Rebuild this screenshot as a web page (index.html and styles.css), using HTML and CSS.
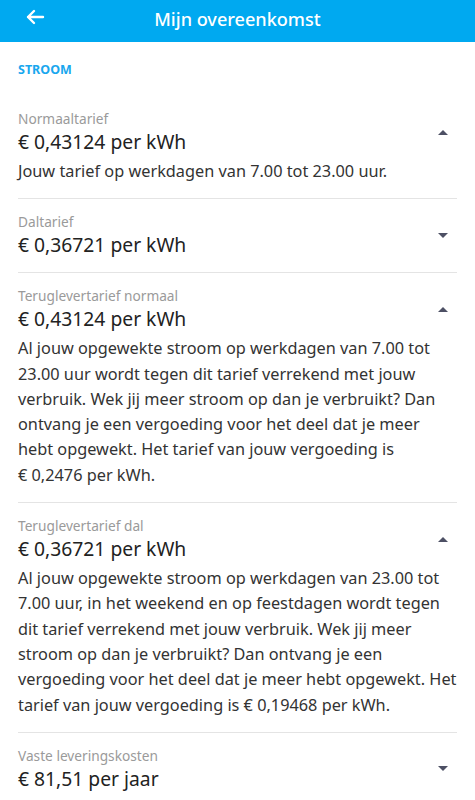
FILE: index.html
```html
<!DOCTYPE html>
<html lang="nl">
<head>
    <meta charset="UTF-8">
    <meta name="viewport" content="width=device-width, initial-scale=1.0">
    <title>Mijn overeenkomst</title>
    <link rel="stylesheet" href="styles.css">
</head>
<body>
    <header class="topbar">
        <button class="back" aria-label="Terug">
            <svg width="20" height="16" viewBox="0 0 20 16">
                <path d="M18 8H3M9 2L3 8l6 6" fill="none" stroke="#fff" stroke-width="2.4" stroke-linecap="round" stroke-linejoin="round"/>
            </svg>
        </button>
        <h1 class="title">Mijn overeenkomst</h1>
    </header>

    <main class="content">
        <h2 class="section">STROOM</h2>

        <div class="item">
            <div class="head">
                <div>
                    <div class="label">Normaaltarief</div>
                    <div class="value">€ 0,43124 per kWh</div>
                </div>
                <span class="caret up"></span>
            </div>
            <p class="desc">Jouw tarief op werkdagen van 7.00 tot 23.00 uur.</p>
        </div>

        <div class="item">
            <div class="head">
                <div>
                    <div class="label">Daltarief</div>
                    <div class="value">€ 0,36721 per kWh</div>
                </div>
                <span class="caret down"></span>
            </div>
        </div>

        <div class="item">
            <div class="head">
                <div>
                    <div class="label">Teruglevertarief normaal</div>
                    <div class="value">€ 0,43124 per kWh</div>
                </div>
                <span class="caret up"></span>
            </div>
            <p class="desc">Al jouw opgewekte stroom op werkdagen van 7.00 tot 23.00 uur wordt tegen dit tarief verrekend met jouw verbruik. Wek jij meer stroom op dan je verbruikt? Dan ontvang je een vergoeding voor het deel dat je meer hebt opgewekt. Het tarief van jouw vergoeding is €&nbsp;0,2476 per kWh.</p>
        </div>

        <div class="item">
            <div class="head">
                <div>
                    <div class="label">Teruglevertarief dal</div>
                    <div class="value">€ 0,36721 per kWh</div>
                </div>
                <span class="caret up"></span>
            </div>
            <p class="desc">Al jouw opgewekte stroom op werkdagen van 23.00 tot 7.00 uur, in het weekend en op feestdagen wordt tegen dit tarief verrekend met jouw verbruik. Wek jij meer stroom op dan je verbruikt? Dan ontvang je een vergoeding voor het deel dat je meer hebt opgewekt. Het tarief van jouw vergoeding is €&nbsp;0,19468 per kWh.</p>
        </div>

        <div class="item">
            <div class="head">
                <div>
                    <div class="label">Vaste leveringskosten</div>
                    <div class="value">€ 81,51 per jaar</div>
                </div>
                <span class="caret down"></span>
            </div>
        </div>
    </main>
</body>
</html>
```

FILE: styles.css
```css
body {
    margin: 0;
    font-family: "Noto Sans", Arial, sans-serif;
    background: #fff;
    color: #2a2a2a;
}

.topbar {
    height: 42px;
    background: #00a9f0;
    display: flex;
    align-items: center;
    justify-content: center;
    position: relative;
}
.back {
    position: absolute;
    left: 25px;
    top: 9px;
    background: none;
    border: none;
    padding: 0;
    width: 20px;
    height: 16px;
}
.title {
    margin: 0 0 4px;
    color: #fff;
    font-size: 18.1px;
    font-weight: 500;
}

.content {
    padding: 0 18px;
}
.section {
    margin: 0;
    padding: 20px 0 18px;
    font-size: 12.5px;
    line-height: 16px;
    font-weight: 700;
    color: #19a7ee;
}

.item {
    padding: 13px 0 14px;
    border-bottom: 1px solid #e4e4e4;
}
.item:last-child {
    border-bottom: none;
}
.head {
    display: flex;
    align-items: center;
    justify-content: space-between;
}
.label {
    font-size: 13.7px;
    line-height: 20px;
    color: #9a9a9a;
}
.value {
    font-size: 19.3px;
    line-height: 26px;
    color: #222;
}
.desc {
    margin: 4px 0 0;
    font-size: 16.3px;
    line-height: 25.3px;
    color: #333;
}

.caret {
    width: 0;
    height: 0;
    margin-right: 9px;
    border-left: 5px solid transparent;
    border-right: 5px solid transparent;
}
.caret.up {
    border-bottom: 5px solid #4d5064;
}
.caret.down {
    border-top: 5px solid #4d5064;
}
```
